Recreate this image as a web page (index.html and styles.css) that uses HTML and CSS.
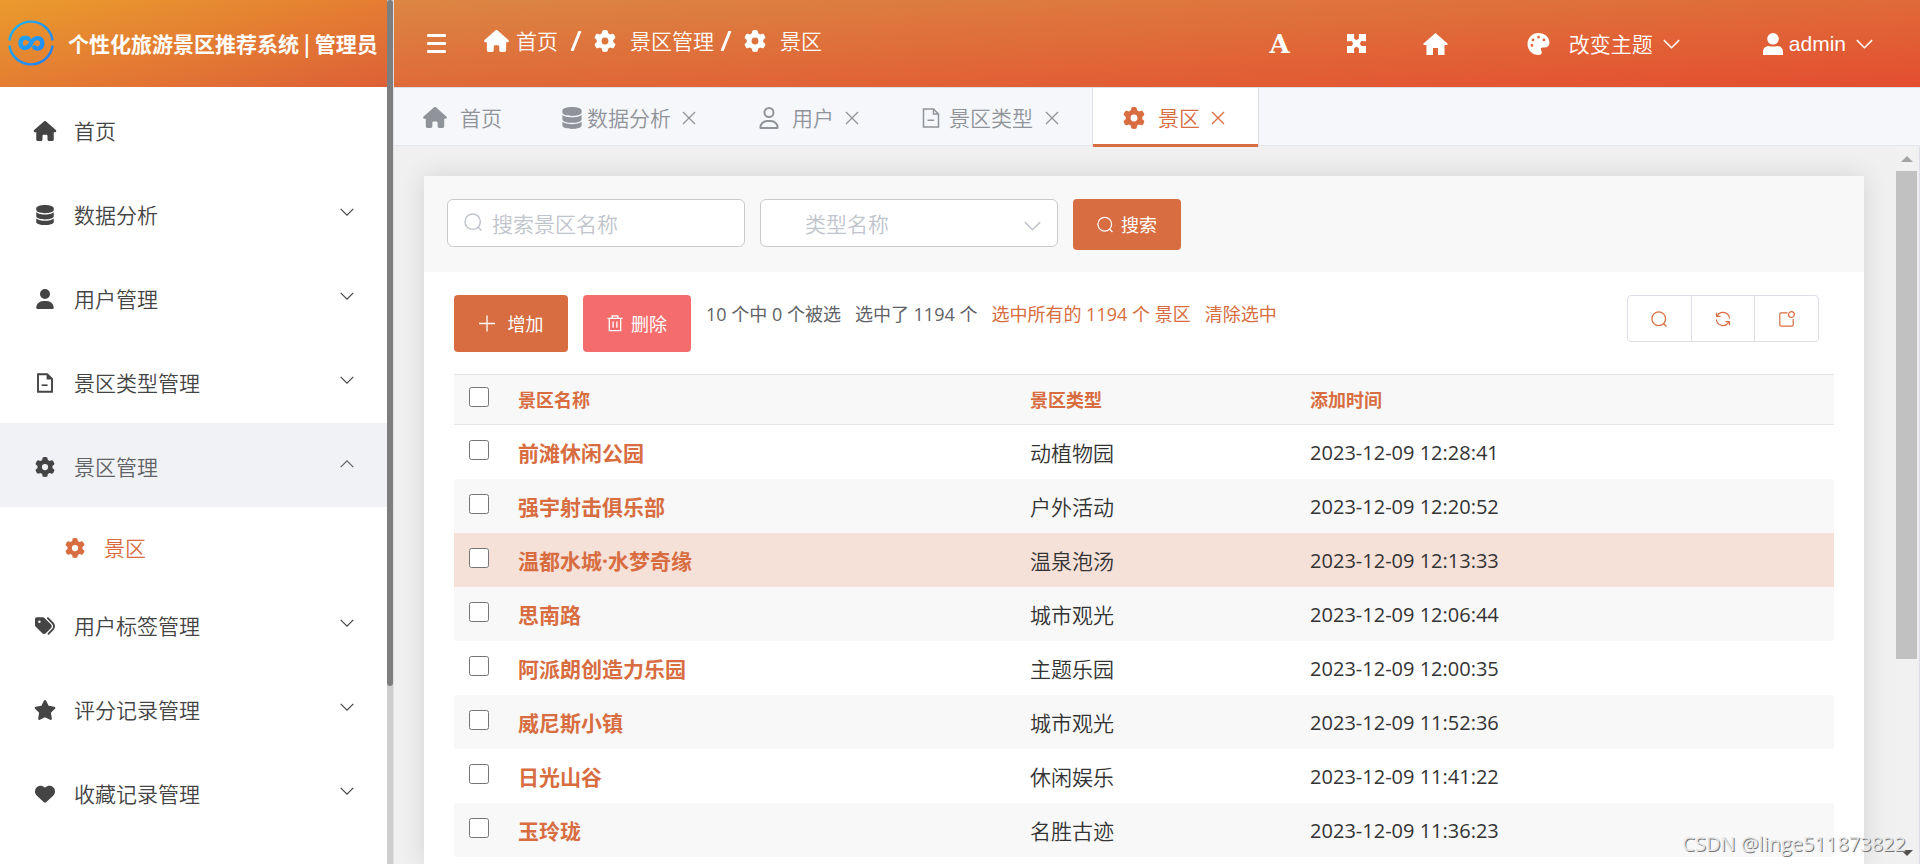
FILE: index.html
```html
<!DOCTYPE html>
<html lang="zh-CN">
<head>
<meta charset="utf-8">
<title>个性化旅游景区推荐系统 | 管理员</title>
<link rel="stylesheet" href="styles.css">
</head>
<body>
<svg class="sprite" aria-hidden="true">
  <symbol id="i-house" viewBox="0 0 576 512"><path fill="currentColor" d="M575.8 255.5c0 18-15 32.1-32 32.1h-32l.7 160.2c0 2.7-.2 5.4-.5 8.1V472c0 22.1-17.9 40-40 40H456c-1.1 0-2.2 0-3.3-.1c-1.4 .1-2.8 .1-4.2 .1H416 392c-22.1 0-40-17.9-40-40V448 384c0-17.7-14.3-32-32-32H256c-17.7 0-32 14.3-32 32v64 24c0 22.1-17.9 40-40 40H160 128.1c-1.5 0-3-.1-4.5-.2c-1.2 .1-2.4 .2-3.6 .2H104c-22.1 0-40-17.9-40-40V360c0-.9 0-1.9 .1-2.8V287.6H32c-18 0-32-14-32-32.1c0-9 3-17 10-24L266.4 8c7-7 15-8 22-8s15 2 21 7L564.8 231.5c8 7 12 15 11 24z"/></symbol>
  <symbol id="i-gear" viewBox="0 0 512 512"><path fill="currentColor" d="M495.9 166.6c3.2 8.7 .5 18.4-6.4 24.6l-43.3 39.4c1.1 8.3 1.7 16.8 1.7 25.4s-.6 17.1-1.7 25.4l43.3 39.4c6.9 6.2 9.6 15.9 6.4 24.6c-4.4 11.9-9.7 23.3-15.8 34.3l-4.7 8.1c-6.6 11-14 21.4-22.1 31.2c-5.9 7.2-15.7 9.6-24.5 6.8l-55.7-17.7c-13.4 10.3-28.2 18.9-44 25.4l-12.5 57.1c-2 9.1-9 16.3-18.2 17.8c-13.8 2.3-28 3.5-42.5 3.5s-28.7-1.2-42.5-3.5c-9.2-1.5-16.2-8.7-18.2-17.8l-12.5-57.1c-15.8-6.5-30.6-15.1-44-25.4L83.1 425.9c-8.8 2.8-18.6 .3-24.5-6.8c-8.1-9.8-15.5-20.2-22.1-31.2l-4.7-8.1c-6.1-11-11.4-22.4-15.8-34.3c-3.2-8.7-.5-18.4 6.4-24.6l43.3-39.4C64.6 273.1 64 264.6 64 256s.6-17.1 1.7-25.4L22.4 191.2c-6.9-6.2-9.6-15.9-6.4-24.6c4.4-11.9 9.7-23.3 15.8-34.3l4.7-8.1c6.6-11 14-21.4 22.1-31.2c5.9-7.2 15.7-9.6 24.5-6.8l55.7 17.7c13.4-10.3 28.2-18.9 44-25.4l12.5-57.1c2-9.1 9-16.3 18.2-17.8C227.3 1.2 241.5 0 256 0s28.7 1.2 42.5 3.5c9.2 1.5 16.2 8.7 18.2 17.8l12.5 57.1c15.8 6.5 30.6 15.1 44 25.4l55.7-17.7c8.8-2.8 18.6-.3 24.5 6.8c8.1 9.8 15.5 20.2 22.1 31.2l4.7 8.1c6.1 11 11.4 22.4 15.8 34.3zM256 336a80 80 0 1 0 0-160 80 80 0 1 0 0 160z"/></symbol>
  <symbol id="i-database" viewBox="0 0 448 512"><path fill="currentColor" d="M448 80v48c0 44.2-100.3 80-224 80S0 172.2 0 128V80C0 35.8 100.3 0 224 0S448 35.8 448 80zM393.2 214.7c20.8-7.4 39.9-16.9 54.8-28.6V288c0 44.2-100.3 80-224 80S0 332.2 0 288V186.1c14.9 11.8 34 21.2 54.8 28.6C99.7 230.7 159.5 240 224 240s124.3-9.3 169.2-25.3zM0 346.1c14.9 11.8 34 21.2 54.8 28.6C99.7 390.7 159.5 400 224 400s124.3-9.3 169.2-25.3c20.8-7.4 39.9-16.9 54.8-28.6V432c0 44.2-100.3 80-224 80S0 476.2 0 432V346.1z"/></symbol>
  <symbol id="i-user" viewBox="0 0 448 512"><path fill="currentColor" d="M224 256A128 128 0 1 0 224 0a128 128 0 1 0 0 256zm-45.7 48C79.8 304 0 383.8 0 482.3C0 498.7 13.3 512 29.7 512H418.3c16.4 0 29.7-13.3 29.7-29.7C448 383.8 368.2 304 269.7 304H178.3z"/></symbol>
  <symbol id="i-user-line" viewBox="0 0 448 512"><g fill="none" stroke="currentColor" stroke-width="46"><circle cx="224" cy="128" r="105"/><path d="M178 327h92c84 0 155 66 155 155 0 4-3 7-7 7H30c-4 0-7-3-7-7 0-89 71-155 155-155z"/></g></symbol>
  <symbol id="i-file" viewBox="0 0 18 20"><path d="M2 1.2h9.2L16 6v12.8H2z" fill="none" stroke="currentColor" stroke-width="1.9"/><path d="M10.6 1v5.6H16z" fill="currentColor"/><path d="M5.6 12.2h6" stroke="currentColor" stroke-width="1.6"/></symbol>
  <symbol id="i-file-thin" viewBox="0 0 18 20"><path d="M1.5 1h10L16.500 6v13h-15zM11.500 1v5h5M5.6 12.200h6.500" fill="none" stroke="currentColor" stroke-width="1.500"/></symbol>
  <symbol id="i-tags" viewBox="0 0 512 512"><path fill="currentColor" d="M345 39.1L472.8 168.4c52.4 53 52.4 138.2 0 191.2L360.8 472.9c-9.3 9.4-24.5 9.5-33.9 .2s-9.5-24.5-.2-33.9L438.6 325.9c33.900-34.300 33.900-89.400 0-123.700L310.900 72.900c-9.300-9.400-9.200-24.600 .2-33.900s24.600-9.200 33.900 .2zM0 229.500V80C0 53.500 21.500 32 48 32H197.500c17 0 33.300 6.700 45.300 18.700l168 168c25 25 25 65.500 0 90.500L277.300 442.700c-25 25-65.500 25-90.500 0l-168-168C6.700 262.700 0 246.500 0 229.500zM144 144a32 32 0 1 0 -64 0 32 32 0 1 0 64 0z"/></symbol>
  <symbol id="i-star" viewBox="0 0 576 512"><path fill="currentColor" d="M316.9 18C311.6 7 300.4 0 288.1 0s-23.400 7-28.800 18L195 150.300 51.400 171.500c-12 1.800-22 10.200-25.700 21.700s-.7 24.200 7.900 32.700L137.800 329 113.200 474.700c-2 12 3 24.200 12.900 31.300s23 8 33.800 2.300l128.300-68.500 128.300 68.500c10.800 5.700 23.900 4.900 33.800-2.300s14.900-19.300 12.900-31.300L438.500 329 542.700 225.900c8.600-8.500 11.700-21.200 7.900-32.700s-13.700-19.900-25.700-21.700L381.200 150.300 316.900 18z"/></symbol>
  <symbol id="i-heart" viewBox="0 0 512 512"><path fill="currentColor" d="M47.6 300.400L228.300 469.100c7.500 7 17.400 10.900 27.700 10.900s20.200-3.900 27.700-10.900L464.400 300.400c30.400-28.300 47.600-68 47.600-109.500v-5.800c0-69.900-50.500-129.500-119.400-141C347 36.500 300.600 51.400 268 84L256 96 244 84c-32.600-32.600-79-47.500-124.600-39.900C50.500 55.600 0 115.200 0 185.100v5.800c0 41.500 17.200 81.200 47.600 109.500z"/></symbol>
  <symbol id="i-home-solid" viewBox="0 0 24 22"><path fill="currentColor" d="M12 0 24 10.500V12h-3v10h-6.500v-7h-5v7H3V12H0v-1.500z"/></symbol>
  <symbol id="i-puzzle" viewBox="0 0 20 20"><path fill="currentColor" d="M0 0h7.500v2.500a2.700 2.700 0 1 0 5 0V0H20v7.500h-2.500a2.700 2.700 0 1 0 0 5H20V20h-7.500v-2.500a2.700 2.700 0 1 0-5 0V20H0v-7.500h2.500a2.700 2.700 0 1 0 0-5H0z"/></symbol>
  <symbol id="i-palette" viewBox="0 0 22 22"><path fill="currentColor" fill-rule="evenodd" d="M11 0c6.200 0 11 4.400 11 9.500 0 3.200-2 5-5 5h-1.800c-1.600 0-2.200 1.200-1.600 2.700.4 1 .9 1.600.6 2.800-.3 1.300-1.500 2-3.200 2C4.900 22 0 17.100 0 11S4.900 0 11 0zM4.500 11a1.400 1.400 0 1 0 0 2.800 1.400 1.400 0 0 0 0-2.800zM5.500 5.500a1.400 1.400 0 1 0 0 2.800 1.400 1.400 0 0 0 0-2.800zM11 2.800a1.400 1.400 0 1 0 0 2.800 1.400 1.400 0 0 0 0-2.800zM16.500 5.500a1.400 1.400 0 1 0 0 2.800 1.400 1.400 0 0 0 0-2.800z"/></symbol>
  <symbol id="i-person" viewBox="0 0 20 22"><ellipse cx="10" cy="5.800" rx="5.800" ry="5.800" fill="currentColor"/><path fill="currentColor" d="M0 22v-3c0-4 3-6 6-6 1.500.8 6.500.8 8 0 3 0 6 2 6 6v3z"/></symbol>
  <symbol id="i-chevron" viewBox="0 0 14 8"><path d="M.7.800 7 7.100 13.300.800" fill="none" stroke="currentColor" stroke-width="1.200"/></symbol>
  <symbol id="i-close" viewBox="0 0 14 14"><path d="M1 1l12 12M13 1 1 13" fill="none" stroke="currentColor" stroke-width="1.300"/></symbol>
  <symbol id="i-search" viewBox="0 0 18 18"><g fill="none" stroke="currentColor" stroke-width="1.400"><circle cx="8.700" cy="8.700" r="7.700"/><path d="M14 14l3.400 3.400"/></g></symbol>
  <symbol id="i-plus" viewBox="0 0 16 16"><path d="M8 0v16M0 8h16" stroke="currentColor" stroke-width="1.300"/></symbol>
  <symbol id="i-trash" viewBox="0 0 16 18"><path d="M0 3.500h16M5 3.500V1h6v2.500M2 3.500v13h12v-13M6 7v6.500M10 7v6.500" fill="none" stroke="currentColor" stroke-width="1.400"/></symbol>
  <symbol id="i-refresh" viewBox="0 0 16 16"><path d="M1.500 5.700V1.800M1.500 5.300h4M2.300 4.800A6.600 6.600 0 0 1 14.600 7.500M14.500 10.300v3.900M14.500 10.700h-4M13.700 11.200A6.600 6.600 0 0 1 1.400 8.500" fill="none" stroke="currentColor" stroke-width="1.200"/></symbol>
  <symbol id="i-note" viewBox="0 0 16 16"><path d="M8.500 1.800H2.200c-.8 0-1.400.6-1.400 1.400v10.600c0 .8.600 1.400 1.400 1.400h10.600c.8 0 1.400-.6 1.400-1.400V8" fill="none" stroke="currentColor" stroke-width="1.200"/><circle cx="12.400" cy="3.600" r="2.900" fill="none" stroke="currentColor" stroke-width="1.200"/></symbol>
</svg>

<div class="app">
  <aside class="aside">
    <div class="aside-body">
      <div class="brand">
        <svg class="brand-logo" viewBox="0 0 46 46" aria-hidden="true">
          <defs><linearGradient id="lg" x1="0" y1="0" x2="46" y2="46" gradientUnits="userSpaceOnUse"><stop offset="0" stop-color="#1cb8f2"/><stop offset="1" stop-color="#2878f0"/></linearGradient></defs>
          <g fill="none" stroke="url(#lg)"><path stroke-width="2.400" d="M1.400 20.500a21.800 21.800 0 0 1 43.200 0M1.400 25.500a21.800 21.800 0 0 0 43.200 0"/><path stroke-width="4.400" stroke-linecap="round" d="M20.500 18.800c-2.300-1.800-8-1.500-8 4.400 0 6.300 7.400 6.300 10.300.3 3-6.800 11.500-7.300 11.500-.4 0 5.900-5.700 6.200-8 4.300"/></g>
        </svg>
        <h1 class="brand-name">个性化旅游景区推荐系统 | 管理员</h1>
      </div>
      <nav class="menu">
        <a class="menu-item" href="#"><svg class="menu-icon"><use href="#i-house"/></svg><span>首页</span></a>
        <a class="menu-item" href="#"><svg class="menu-icon"><use href="#i-database"/></svg><span>数据分析</span><svg class="menu-arrow"><use href="#i-chevron"/></svg></a>
        <a class="menu-item" href="#"><svg class="menu-icon"><use href="#i-user"/></svg><span>用户管理</span><svg class="menu-arrow"><use href="#i-chevron"/></svg></a>
        <a class="menu-item" href="#"><svg class="menu-icon"><use href="#i-file"/></svg><span>景区类型管理</span><svg class="menu-arrow"><use href="#i-chevron"/></svg></a>
        <a class="menu-item menu-item--open" href="#"><svg class="menu-icon"><use href="#i-gear"/></svg><span>景区管理</span><svg class="menu-arrow"><use href="#i-chevron"/></svg></a>
        <a class="menu-item menu-item--sub" href="#"><svg class="menu-icon"><use href="#i-gear"/></svg><span>景区</span></a>
        <a class="menu-item" href="#"><svg class="menu-icon"><use href="#i-tags"/></svg><span>用户标签管理</span><svg class="menu-arrow"><use href="#i-chevron"/></svg></a>
        <a class="menu-item" href="#"><svg class="menu-icon"><use href="#i-star"/></svg><span>评分记录管理</span><svg class="menu-arrow"><use href="#i-chevron"/></svg></a>
        <a class="menu-item" href="#"><svg class="menu-icon"><use href="#i-heart"/></svg><span>收藏记录管理</span><svg class="menu-arrow"><use href="#i-chevron"/></svg></a>
      </nav>
    </div>
    <div class="aside-track"><div class="aside-thumb"></div></div>
  </aside>

  <div class="main">
    <header class="topbar">
      <button class="burger" type="button" aria-label="折叠菜单"><i></i><i></i><i></i></button>
      <nav class="crumbs">
        <a class="crumb crumb--home" href="#"><svg class="crumb-icon"><use href="#i-house"/></svg>首页</a>
        <svg class="slash" viewBox="0 0 12 20" aria-hidden="true"><path d="M10 0 2 20" stroke="currentColor" stroke-width="3"/></svg>
        <a class="crumb" href="#"><svg class="crumb-icon"><use href="#i-gear"/></svg>景区管理</a>
        <svg class="slash slash--tight" viewBox="0 0 12 20" aria-hidden="true"><path d="M10 0 2 20" stroke="currentColor" stroke-width="3"/></svg>
        <a class="crumb" href="#"><svg class="crumb-icon"><use href="#i-gear"/></svg>景区</a>
      </nav>
      <div class="tools">
        <button class="tool tool--font" type="button">A</button>
        <button class="tool" type="button" aria-label="全屏"><svg class="tool-puzzle"><use href="#i-puzzle"/></svg></button>
        <button class="tool" type="button" aria-label="主页"><svg class="tool-home"><use href="#i-home-solid"/></svg></button>
        <button class="tool tool--theme" type="button"><svg class="tool-palette"><use href="#i-palette"/></svg>改变主题<svg class="tool-arrow"><use href="#i-chevron"/></svg></button>
        <button class="tool tool--user" type="button"><svg class="tool-person"><use href="#i-person"/></svg>admin<svg class="tool-arrow"><use href="#i-chevron"/></svg></button>
      </div>
    </header>

    <nav class="tabs">
      <div class="tab tab--wide tab--home"><svg class="tab-icon tab-icon--home"><use href="#i-house"/></svg><a href="#">首页</a></div>
      <div class="tab"><svg class="tab-icon"><use href="#i-database"/></svg><a href="#">数据分析</a><button class="tab-close" type="button" aria-label="关闭"><svg><use href="#i-close"/></svg></button></div>
      <div class="tab tab--wide"><svg class="tab-icon"><use href="#i-user-line"/></svg><a href="#">用户</a><button class="tab-close" type="button" aria-label="关闭"><svg><use href="#i-close"/></svg></button></div>
      <div class="tab tab--file"><svg class="tab-icon tab-icon--file"><use href="#i-file-thin"/></svg><a href="#">景区类型</a><button class="tab-close" type="button" aria-label="关闭"><svg><use href="#i-close"/></svg></button></div>
      <div class="tab tab--wide tab--active"><svg class="tab-icon tab-icon--gear"><use href="#i-gear"/></svg><a href="#">景区</a><button class="tab-close" type="button" aria-label="关闭"><svg><use href="#i-close"/></svg></button></div>
    </nav>

    <div class="stage">
      <main class="content">
        <section class="card">
          <form class="filters">
            <label class="field"><svg class="field-icon"><use href="#i-search"/></svg><input class="field-input" type="text" placeholder="搜索景区名称" aria-label="搜索景区名称"></label>
            <label class="field"><select class="field-select" aria-label="类型名称"><option>类型名称</option></select><svg class="field-arrow"><use href="#i-chevron"/></svg></label>
            <button class="btn btn--search" type="button"><svg class="btn-icon"><use href="#i-search"/></svg>搜索</button>
          </form>
          <div class="list">
            <div class="actions">
              <button class="btn btn--add" type="button"><svg class="btn-icon"><use href="#i-plus"/></svg>增加</button>
              <button class="btn btn--delete" type="button"><svg class="btn-icon"><use href="#i-trash"/></svg>删除</button>
              <p class="status"><span>10 个中 0 个被选</span><span>选中了 1194 个</span><a href="#">选中所有的 1194 个 景区</a><a href="#">清除选中</a></p>
              <div class="group">
                <button class="group-btn" type="button" aria-label="搜索"><svg><use href="#i-search"/></svg></button>
                <button class="group-btn" type="button" aria-label="刷新"><svg><use href="#i-refresh"/></svg></button>
                <button class="group-btn" type="button" aria-label="新窗口"><svg><use href="#i-note"/></svg></button>
              </div>
            </div>
            <table class="grid">
              <colgroup><col class="col-check"><col class="col-name"><col class="col-type"><col></colgroup>
              <thead><tr><th><input class="check" type="checkbox" aria-label="全选"></th><th>景区名称</th><th>景区类型</th><th>添加时间</th></tr></thead>
              <tbody>
                <tr><td><input class="check" type="checkbox" aria-label="前滩休闲公园"></td><td><a href="#">前滩休闲公园</a></td><td>动植物园</td><td class="time">2023-12-09 12:28:41</td></tr>
                <tr><td><input class="check" type="checkbox" aria-label="强宇射击俱乐部"></td><td><a href="#">强宇射击俱乐部</a></td><td>户外活动</td><td class="time">2023-12-09 12:20:52</td></tr>
                <tr class="hovered"><td><input class="check" type="checkbox" aria-label="温都水城·水梦奇缘"></td><td><a href="#">温都水城·水梦奇缘</a></td><td>温泉泡汤</td><td class="time">2023-12-09 12:13:33</td></tr>
                <tr><td><input class="check" type="checkbox" aria-label="思南路"></td><td><a href="#">思南路</a></td><td>城市观光</td><td class="time">2023-12-09 12:06:44</td></tr>
                <tr><td><input class="check" type="checkbox" aria-label="阿派朗创造力乐园"></td><td><a href="#">阿派朗创造力乐园</a></td><td>主题乐园</td><td class="time">2023-12-09 12:00:35</td></tr>
                <tr><td><input class="check" type="checkbox" aria-label="威尼斯小镇"></td><td><a href="#">威尼斯小镇</a></td><td>城市观光</td><td class="time">2023-12-09 11:52:36</td></tr>
                <tr><td><input class="check" type="checkbox" aria-label="日光山谷"></td><td><a href="#">日光山谷</a></td><td>休闲娱乐</td><td class="time">2023-12-09 11:41:22</td></tr>
                <tr><td><input class="check" type="checkbox" aria-label="玉玲珑"></td><td><a href="#">玉玲珑</a></td><td>名胜古迹</td><td class="time">2023-12-09 11:36:23</td></tr>
              </tbody>
            </table>
          </div>
        </section>
      </main>
      <div class="scroll">
        <i class="scroll-up"></i>
        <div class="scroll-track"><div class="scroll-thumb"></div></div>
        <i class="scroll-down"></i>
      </div>
    </div>
  </div>
</div>
<div class="watermark">CSDN @linge511873822</div>
</body>
</html>
```
FILE: styles.css
```css
:root {
  --accent: #d76d40;
  --danger: #f56c6c;
  --stripe: #f8f8f8;
  --line: #e4e7ed;
  --bar: 87px;
}

* { box-sizing: border-box; }

body {
  margin: 0;
  height: 100vh;
  overflow: hidden;
  background: #f0f0f0;
  color: #444;
  font: 350 21px/30px "Open Sans", "Noto Sans CJK SC", sans-serif;
}

a { color: inherit; text-decoration: none; }
button, input, select { font: inherit; color: inherit; }
button { border: 0; background: none; padding: 0; }
svg { flex: none; }

.sprite { position: absolute; width: 0; height: 0; }

.app { display: flex; height: 100vh; }

/* sidebar */
.aside {
  display: flex;
  flex: none;
  width: 394px;
  background: #fff;
  border-right: 1px solid #dfdfe4;
}
.aside-body { flex: 1; min-width: 0; }
.aside-track { width: 6px; background: #cdcdcd; }
.aside-thumb { height: 79.4%; background: #7e7e7e; border-radius: 3px; }

.brand {
  display: flex;
  align-items: center;
  gap: 14px;
  height: var(--bar);
  padding: 0 0 2px 8px;
  background: linear-gradient(to bottom right, #ea9b2d, #dd6037);
}
.brand-logo { width: 46px; height: 46px; }
.brand-name {
  margin: 0;
  color: #fff;
  font: 700 21px/30px "Noto Sans CJK SC", sans-serif;
  white-space: nowrap;
}

.menu-item {
  display: flex;
  align-items: center;
  gap: 14px;
  height: 84px;
  padding: 4px 33px 0 30px;
}
.menu-icon { width: 30px; height: 20px; }
.menu-arrow { width: 14px; height: 8px; margin: 0 0 6px auto; }
.menu-item--open { background: #f0f2f5; color: #606266; }
.menu-item--open .menu-icon { color: #444; }
.menu-item--open .menu-arrow { transform: rotate(180deg); }
.menu-item--sub { height: 75px; padding-left: 60px; padding-top: 7px; color: var(--accent); }

/* top bar */
.main { display: flex; flex: 1; flex-direction: column; min-width: 0; }
.topbar {
  display: flex;
  align-items: center;
  flex: none;
  height: var(--bar);
  padding: 0 47px 0 33px;
  background: linear-gradient(to bottom right, #db8643, #e44e2f);
  color: #fff;
}
.burger { display: grid; gap: 5px; width: 19px; }
.burger i { height: 3px; border-radius: 1px; background: #fff; }
.crumbs { display: flex; align-items: center; margin-left: 38px; padding-bottom: 6px; }
.crumb { display: flex; align-items: center; gap: 14px; }
.crumb--home { gap: 7px; }
.crumb-icon { width: 22px; height: 22px; }
.crumb--home .crumb-icon { width: 25px; }
.slash { width: 12px; height: 20px; margin: 0 12px; }
.slash--tight { margin-left: 6px; }

.tools { display: flex; align-items: center; margin-left: auto; }
.tool { display: flex; align-items: center; line-height: 30px; margin-left: 57px; }
.tool--font { font: 700 26px/30px "DejaVu Serif", serif; }
.tool-puzzle { width: 19px; height: 19px; }
.tool-home { width: 25px; height: 22px; }
.tool-palette { width: 23px; height: 22px; margin-right: 19px; }
.tool-person { width: 20px; height: 22px; margin-right: 6px; }
.tool-arrow { width: 17px; height: 10px; margin-left: 10px; }
.tool--theme { margin-left: 79px; }
.tool--user { margin-left: 83px; font-family: "Liberation Sans", sans-serif; }

/* tabs */
.tabs {
  display: flex;
  flex: none;
  height: 59px;
  border: solid var(--line);
  border-width: 1px 0;
  border-top-color: #dcdfe6;
  background: #f5f7fb;
  color: #909399;
}
.tab { display: flex; align-items: center; gap: 5px; padding: 2px 30px 0; }
.tab--wide { gap: 13px; }
.tab--home { padding-left: 29px; }
.tab--file { gap: 9px; }
.tab-icon { width: 20px; height: 22px; }
.tab-icon--home { width: 24px; height: 21px; }
.tab-icon--file { width: 18px; height: 20px; }
.tab-icon--gear { width: 22px; }
.tab-close { display: grid; place-items: center; width: 21px; height: 21px; margin-left: 2px; }
.tab--wide .tab-close { margin-left: -6px; }
.tab--file .tab-close { margin-left: -1px; }
.tab-close svg { width: 14px; height: 14px; }
.tab--active {
  height: 59px;
  padding-bottom: 2px;
  border: solid #dcdfe6;
  border-width: 0 1px;
  box-shadow: inset 0 -3px var(--accent);
  background: #fff;
  color: var(--accent);
}

/* content */
.stage {
  display: flex;
  flex: 1;
  min-height: 0;
  padding-right: 2px;
  border-right: 1px solid #dcdfe6;
}
.content { flex: 1; min-width: 0; overflow: hidden; padding: 30px 32px 0 30px; }
.card { min-height: 100%; background: #fff; box-shadow: 0 0 24px rgba(0, 0, 0, .12); }

.filters {
  display: flex;
  align-items: flex-start;
  gap: 15px;
  padding: 23px 23px 22px;
  background: var(--stripe);
}
.field {
  display: flex;
  align-items: center;
  width: 298px;
  height: 48px;
  border: 1px solid #c8cacd;
  border-radius: 6px;
  background: #fff;
  color: #c0c4cc;
}
.field-icon { width: 18px; height: 18px; margin: 0 10px 2px 16px; }
.field-input { flex: 1; min-width: 0; height: 46px; padding: 2px 0 0; border: 0; border-radius: 6px; outline: 0; background: none; }
.field-input::placeholder { color: #c0c4cc; opacity: 1; }
.field-select { flex: 1; height: 46px; padding: 2px 0 0 44px; border: 0; appearance: none; background: none; }
.field-arrow { width: 17px; height: 10px; margin-right: 16px; margin-top: 6px; }

.btn {
  display: flex;
  align-items: center;
  justify-content: center;
  gap: 8px;
  width: 108px;
  height: 57px;
  border-radius: 4px;
  background: var(--accent);
  color: #fff;
  font-size: 18px;
  font-weight: 400;
  line-height: 24px;
}
.btn-icon { width: 16px; height: 17px; }
.btn--search { height: 51px; }
.btn--add { width: 114px; gap: 13px; }
.btn--delete { background: var(--danger); }

.list { padding: 23px 30px 0; }
.actions { display: flex; gap: 15px; padding: 0 15px 22px 0; }
.status {
  display: flex;
  gap: 14px;
  margin: 6px 0 0;
  color: #606266;
  font-size: 18px;
  font-weight: 400;
  line-height: 26px;
}
.status a { color: var(--accent); }
.group {
  display: flex;
  width: 192px;
  height: 47px;
  margin-left: auto;
  border: 1px solid #dcdfe6;
  border-radius: 4px;
  color: var(--accent);
}
.group-btn { display: grid; place-items: center; flex: 1; }
.group-btn + .group-btn { border-left: 1px solid #dcdfe6; }
.group-btn svg { width: 16px; height: 16px; }

.grid { width: 100%; border-collapse: collapse; table-layout: fixed; }
.col-check { width: 49px; }
.col-name { width: 37.1%; }
.col-type { width: 20.3%; }
.grid th, .grid td { padding: 0 15px; text-align: left; white-space: nowrap; }
.grid th {
  height: 50px;
  border: solid #e4e5e7;
  border-width: 1px 0;
  background: var(--stripe);
  color: var(--accent);
  font-size: 18px;
  font-weight: 700;
}
.grid td { height: 54px; padding-top: 2px; color: #333; }
.grid tbody tr:nth-child(even) { background: var(--stripe); }
.grid tbody .hovered { background: #f6e1d9; }
.grid td a { color: var(--accent); font-weight: 700; }
.grid .time { font-size: 20px; font-weight: 400; }
.check { display: block; width: 20px; height: 20px; margin: 0 0 5px; }

/* scrollbar of the content area */
.scroll { display: flex; flex-direction: column; flex: none; width: 21px; background: #f1f1f1; }
.scroll-up, .scroll-down {
  align-self: center;
  margin: 10px 0 9px;
  border: 6px solid transparent;
  border-top-width: 0;
  border-bottom-color: #a3a3a3;
}
.scroll-down { margin: 9px 0 8px; border-width: 6px 6px 0; border-color: #505050 transparent; }
.scroll-track { flex: 1; }
.scroll-thumb { height: 72.8%; background: #c1c1c1; }

.watermark {
  position: absolute;
  right: 14px;
  bottom: 6px;
  color: #e6e6e6;
  font: 400 20px/28px "Open Sans", sans-serif;
  text-shadow: 1px 1px 0 #777;
}
```
